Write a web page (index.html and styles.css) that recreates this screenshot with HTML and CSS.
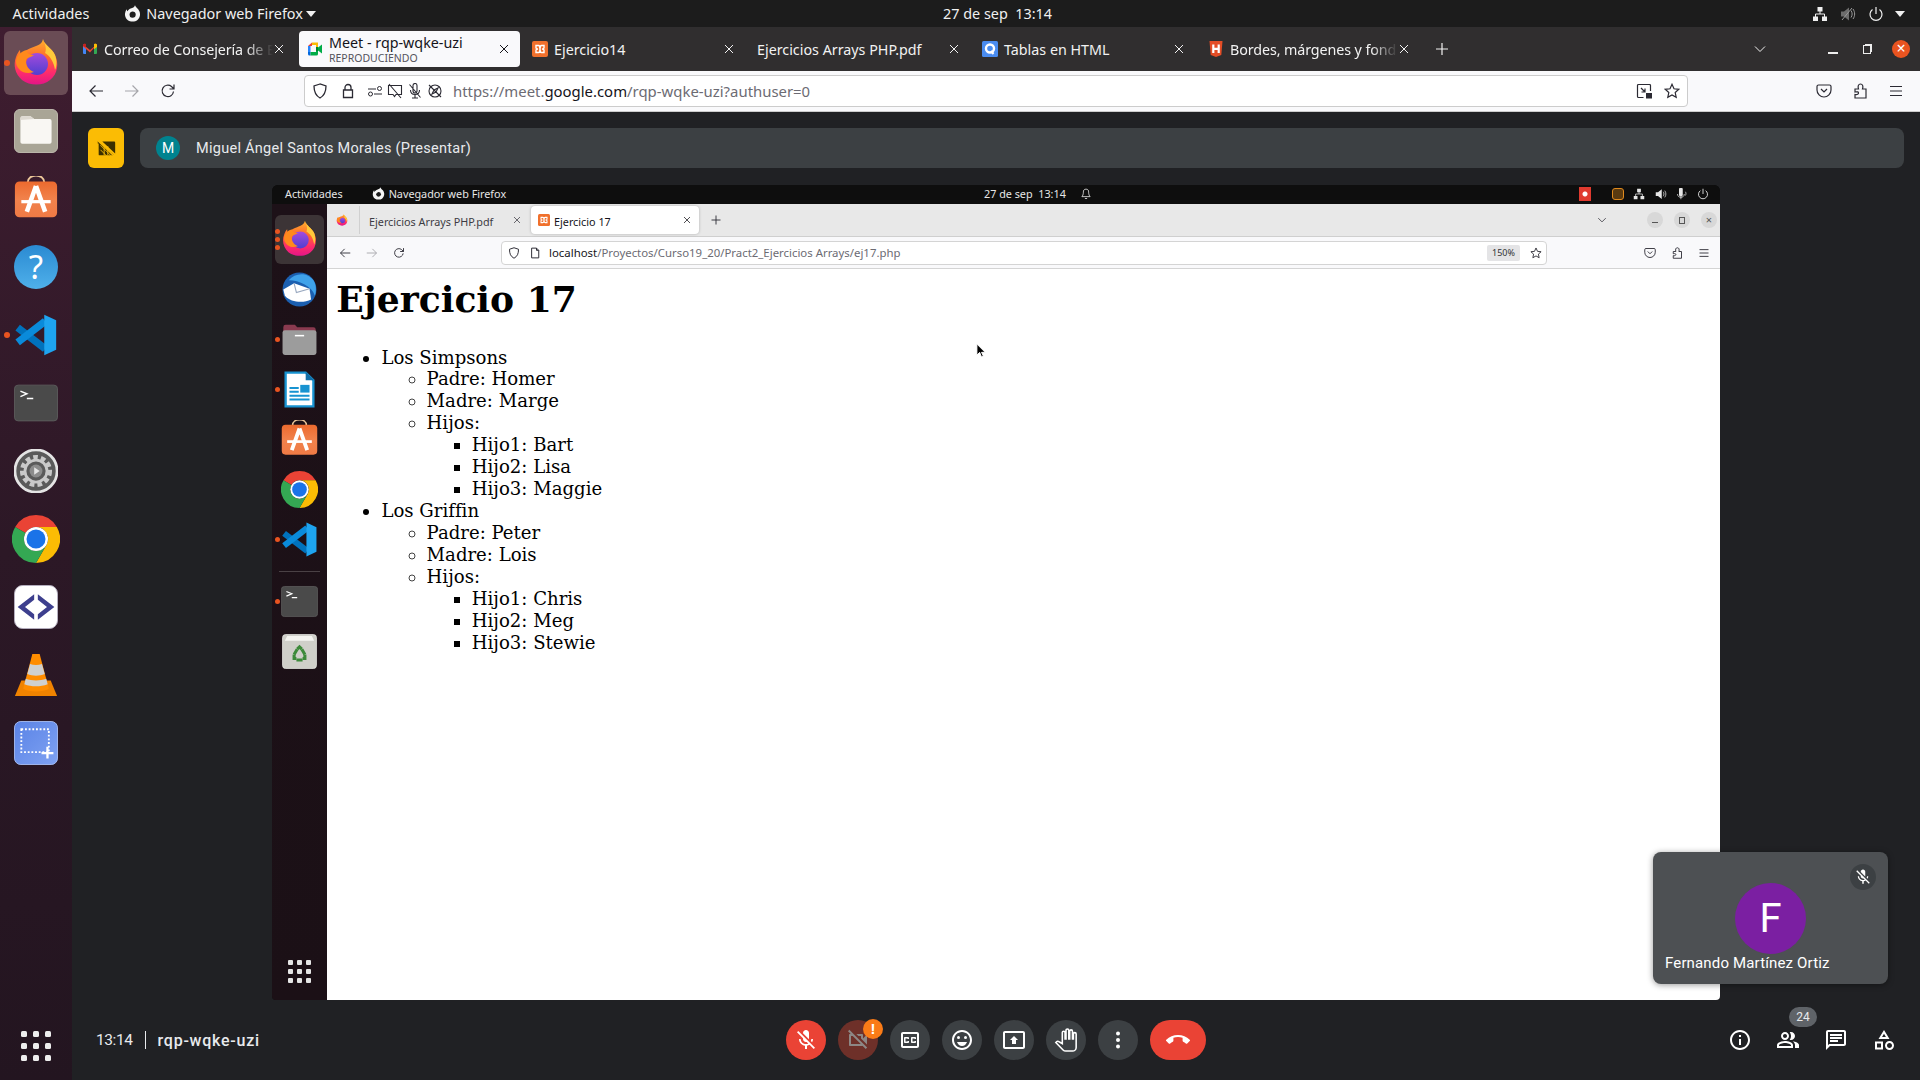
FILE: index.html
```html
<!DOCTYPE html>
<html lang="es">
<head>
    <meta charset="UTF-8">
    <title>Meet - rqp-wqke-uzi</title>
    <link rel="stylesheet" href="styles.css">
</head>
<body>
    <!-- Shared icons -->
    <svg class="sprites" xmlns="http://www.w3.org/2000/svg">
        <defs>
            <linearGradient id="ffBody" x1="0" y1="0" x2="0" y2="1">
                <stop offset="0" stop-color="#ffb02e"/><stop offset=".4" stop-color="#ff6a2b"/><stop offset=".72" stop-color="#ff2d6a"/><stop offset="1" stop-color="#e31587"/>
            </linearGradient>
            <linearGradient id="ffCore" x1="0" y1="0" x2="0" y2="1">
                <stop offset="0" stop-color="#a54bdc"/><stop offset="1" stop-color="#4f3fd0"/>
            </linearGradient>
            <linearGradient id="bagFill" x1="0" y1="0" x2="0" y2="1">
                <stop offset="0" stop-color="#ec6a2e"/><stop offset=".5" stop-color="#f1824c"/><stop offset="1" stop-color="#ef7a45"/>
            </linearGradient>
            <linearGradient id="shotFill" x1="0" y1="0" x2="1" y2="1">
                <stop offset="0" stop-color="#5a83e6"/><stop offset="1" stop-color="#7fa2f2"/>
            </linearGradient>
        </defs>
        <symbol id="i-firefox" viewBox="0 0 48 48">
            <path fill="url(#ffBody)" d="M31 1c2 7 9 9 12 16 4 8 3 19-5 25-7 6-20 6-28 0C3 36 1 27 4 19c1-3 3-6 4-7 0 3 1 5 2 6 2-5 6-7 9-8 5-2 11-3 12-9z"/>
            <path fill="#ffc93a" d="M31 1c2 7 9 9 12 16 2 5 2 11 0 15-1-8-5-14-10-17 2-4 0-9-2-14z"/>
            <circle cx="25" cy="26" r="11" fill="url(#ffCore)"/>
            <path fill="#ff8a1c" d="M4 24c0-6 5-11 11-12-1 3 3 5 7 5-4 3-8 2-8 6 0 5 3 9 8 11-6 2-12 1-15-3-2-2-3-5-3-7z"/>
        </symbol>
        <symbol id="i-fflogo" viewBox="0 0 48 48">
            <path fill="#f4f4f4" d="M31 1c2 7 9 9 12 16 4 8 3 19-5 25-7 6-20 6-28 0C3 36 1 27 4 19c1-3 3-6 4-7 0 3 1 5 2 6 2-5 6-7 9-8 5-2 11-3 12-9z"/>
            <circle cx="24" cy="27" r="9" fill="#1c1c1c"/>
            <path fill="#f4f4f4" d="M8 20c5-5 11-4 14-1-4 1-7 3-7 8 0 3 1 6 3 8-7-2-11-9-10-15z"/>
        </symbol>
        <symbol id="i-files" viewBox="0 0 48 48">
            <rect x=".5" y=".5" width="47" height="47" rx="6" fill="#a9a596" stroke="#c4c1b4"/>
            <path fill="#f9f7f3" d="M7 10a2 2 0 0 1 2-2h9l4 3h17a2 2 0 0 1 2 2v23a2 2 0 0 1-2 2H9a2 2 0 0 1-2-2z"/>
            <path fill="#dedad2" d="M7 12v-2a2 2 0 0 1 2-2h9l4 3z"/>
        </symbol>
        <symbol id="i-store" viewBox="0 2 48 48">
            <path d="M15 9c0-10 18-10 18 0" fill="none" stroke="#eec99b" stroke-width="2"/>
            <rect x="1" y="8" width="46" height="39" rx="5" fill="url(#bagFill)"/>
            <path d="M24 13 14 41M24 13l10 28" stroke="#fff" stroke-width="5" fill="none"/>
            <path d="M8 30h32" stroke="#fff" stroke-width="3.5"/>
        </symbol>
        <symbol id="i-code" viewBox="0 0 48 48">
            <path d="M4 16l30 23" stroke="#0072bd" stroke-width="8" fill="none"/>
            <path d="M4 32 34 9" stroke="#0a8bdb" stroke-width="8" fill="none"/>
            <path fill="#1ea4f0" d="M33 2l13 6v32l-13 6z"/>
        </symbol>
        <symbol id="i-term" viewBox="0 0 48 40">
            <rect x=".5" y=".5" width="47" height="39" rx="4" fill="#4a4a4a" stroke="#5c5c5c"/>
            <path d="M7 7l7 3-7 3M14 15h7" stroke="#fff" stroke-width="1.6" fill="none"/>
        </symbol>
        <symbol id="i-settings" viewBox="0 0 48 48">
            <circle cx="24" cy="24" r="23" fill="#5a5a5a" stroke="#e4e4e4" stroke-width="3"/>
            <circle cx="24" cy="24" r="15" fill="none" stroke="#c9c9c9" stroke-width="5" stroke-dasharray="5 3.4"/>
            <circle cx="24" cy="24" r="12" fill="none" stroke="#c9c9c9" stroke-width="3"/>
            <circle cx="24" cy="24" r="7" fill="#8c8c8c"/>
            <path fill="#e4e4e4" d="M22 20l6 4-6 4z"/>
        </symbol>
        <symbol id="i-chrome" viewBox="0 0 48 48">
            <path fill="#ea4335" d="M24 0a24 24 0 0 1 20.8 12H24a12 12 0 0 0-10.4 6L3.2 12A24 24 0 0 1 24 0z"/>
            <path fill="#fbbc04" d="M44.8 12A24 24 0 0 1 24 48l10.4-18A12 12 0 0 0 24 12z"/>
            <path fill="#34a853" d="M3.2 12A24 24 0 0 0 24 48l10.4-18a12 12 0 0 1-20.8-12z"/>
            <circle cx="24" cy="24" r="12" fill="#fff"/>
            <circle cx="24" cy="24" r="9.5" fill="#1a73e8"/>
        </symbol>
        <symbol id="i-connect" viewBox="0 0 48 48">
            <rect x=".5" y=".5" width="47" height="47" rx="9" fill="#fff" stroke="#b9b3c4"/>
            <path fill="#3d3f8e" d="M22 10v6l-10 8 10 8v6L4 24zM26 10v6l10 8-10 8v6l18-14z"/>
        </symbol>
        <symbol id="i-vlc" viewBox="0 0 48 48">
            <path fill="#f08300" d="M8 30h32l7 17H1z"/>
            <path fill="#ff8d00" d="M20 1h8l10 38c-6 4-22 4-28 0z"/>
            <path fill="#cfd0cf" d="M17.5 12c4 1.500 9 1.500 13 0l3 11c-6 2.500-13 2.500-19 0zM12.800 28c7 2.500 15.400 2.500 22.400 0l1.500 6c-8 3-17.400 3-25.400 0z"/>
        </symbol>
        <symbol id="i-shot" viewBox="0 0 48 48">
            <rect x=".5" y=".5" width="47" height="47" rx="7" fill="url(#shotFill)" stroke="#a9c0f5"/>
            <rect x="8" y="9" width="30" height="25" fill="none" stroke="#fff" stroke-width="2" stroke-dasharray="2 2"/>
            <path d="M30 35h13M36.500 28v13" stroke="#fff" stroke-width="2.500"/>
        </symbol>
        <symbol id="i-bird" viewBox="0 0 48 48">
            <circle cx="24" cy="24" r="22" fill="#1b5fb0"/>
            <path fill="#3fa2ea" d="M10 12c8-10 24-11 32 0 4 6 4 14 2 20-4-12-20-20-34-20z"/>
            <path fill="#fff" d="M3 24l14-8 20 7 2 14c-10 5-26 4-34-5z"/>
            <path fill="none" stroke="#9aa9c0" stroke-width="1.500" d="M17 16l3 12 17-5"/>
        </symbol>
        <symbol id="i-folder-red" viewBox="0 0 48 44">
            <path fill="#8a3a4f" d="M3 6a3 3 0 0 1 3-3h12l3 3h21a3 3 0 0 1 3 3v8H3z"/>
            <rect x="2" y="10" width="44" height="32" rx="3" fill="#9c9c9c"/>
            <path d="M18 17h12" stroke="#fff" stroke-width="2"/>
        </symbol>
        <symbol id="i-writer" viewBox="0 0 48 48">
            <path fill="#fff" stroke="#1793d1" stroke-width="3" d="M6 2h26l10 10v34H6z"/>
            <path fill="#126fa8" d="M32 1l11 11H32z"/>
            <path stroke="#1793d1" stroke-width="2.500" d="M11 22h12M11 27h12M11 32h26M11 37h26"/>
            <rect x="25" y="18" width="12" height="10" fill="#1793d1"/>
        </symbol>
        <symbol id="i-trash" viewBox="0 0 48 48">
            <rect x="2" y="2" width="44" height="44" rx="4" fill="#cfcfc9" stroke="#e6e6e2"/>
            <path fill="#f4f4f0" d="M8 4h32l3 6H5z"/>
            <g fill="none" stroke="#3c8a3a" stroke-width="4">
                <path d="M17 28l4-7M27 21l4 7M28 35h-8"/>
                <path d="M21 21l3-3 3 3M31 28v5h-3M17 28v5h3"/>
            </g>
        </symbol>
        <symbol id="t-gmail" viewBox="0 0 16 16">
            <path fill="#4285f4" d="M1 3.500h3V13H2a1 1 0 0 1-1-1z"/>
            <path fill="#34a853" d="M12 3.500h3V12a1 1 0 0 1-1 1h-2z"/>
            <path fill="#ea4335" d="M1 3.500 8 9l4-3.200V3l3 .5L8 11.500 1 5.500z"/>
            <path fill="#fbbc04" d="M12 3l1.500-.5 1.500 1V6l-3 2.200z"/>
            <path fill="#c5221f" d="M1 3.500 2.500 2.500 4 3v3.400L1 5z"/>
        </symbol>
        <symbol id="t-meet" viewBox="0 0 16 16">
            <path fill="#00832d" d="M9 5h2v6H9z"/>
            <path fill="#00ac47" d="M11 6.500l4-3v9l-4-3z"/>
            <path fill="#fbbc04" d="M5 1.500h6v4.500H9V4H5z"/>
            <path fill="#ea4335" d="M5 1.500V5H1z"/>
            <path fill="#2684fc" d="M1 5h2.500v6H1z"/>
            <path fill="#0066da" d="M1 11h2.500v3.500H2.500a1.500 1.500 0 0 1-1.500-1.500z"/>
            <path fill="#00ac47" d="M3.500 11H9v-1h2v3a1.500 1.500 0 0 1-1.500 1.500h-6z"/>
        </symbol>
        <symbol id="t-xampp" viewBox="0 0 16 16">
            <rect width="16" height="16" rx="2" fill="#f0702c"/>
            <path d="M4 4.500h2.500c2 0 1 3.500 1.500 3.500s-.5-3.500 1.500-3.500H12V7c0 1-2 1-2 1s2 0 2 1v2.500H9.500C7.500 11.500 8.500 8 8 8s.5 3.500-1.500 3.500H4V9c0-1 2-1 2-1S4 8 4 7z" fill="none" stroke="#fff" stroke-width="1.400"/>
        </symbol>
        <symbol id="t-quest" viewBox="0 0 16 16">
            <rect width="16" height="16" rx="1.500" fill="#4a8cf0"/>
            <circle cx="8" cy="7.500" r="4" fill="none" stroke="#fff" stroke-width="2.400"/>
            <path d="M9 10l2.500 3" stroke="#fff" stroke-width="2"/>
        </symbol>
        <symbol id="t-html" viewBox="0 0 16 16">
            <path fill="#e44d26" d="M1.500 0h13L13.300 14 8 16l-5.300-2z"/>
            <path d="M5.300 3.500v8.500M10.700 3.500v8.500M5.300 7.800h5.400" stroke="#fff" stroke-width="2.200"/>
        </symbol>
        <symbol id="u-close" viewBox="0 0 16 16"><path d="M4 4l8 8M12 4l-8 8" stroke="currentColor" fill="none"/></symbol>
        <symbol id="u-plus" viewBox="0 0 16 16"><path d="M8 2v12M2 8h12" stroke="currentColor" stroke-width="1.200" fill="none"/></symbol>
        <symbol id="u-chevron" viewBox="0 0 16 16"><path d="M3 5.500l5 5 5-5" stroke="currentColor" fill="none"/></symbol>
        <symbol id="u-back" viewBox="0 0 16 16"><path d="M15 8H2M7.500 2.500 2 8l5.500 5.500" stroke="currentColor" stroke-width="1.200" fill="none"/></symbol>
        <symbol id="u-fwd" viewBox="0 0 16 16"><path d="M1 8h13M8.500 2.500 14 8l-5.500 5.500" stroke="currentColor" stroke-width="1.200" fill="none"/></symbol>
        <symbol id="u-reload" viewBox="0 0 16 16"><path d="M13.500 8.500A5.700 5.700 0 1 1 11.500 3.500L14 6M14 1.500V6H9.500" stroke="currentColor" stroke-width="1.200" fill="none"/></symbol>
        <symbol id="u-shield" viewBox="0 0 16 16"><path d="M8 1 2 3c0 6 1.500 9.500 6 12 4.500-2.500 6-6 6-12z" stroke="currentColor" stroke-width="1.300" fill="none"/></symbol>
        <symbol id="u-lock" viewBox="0 0 16 16"><path d="M5 7V4.500a3 3 0 0 1 6 0V7M3.500 7h9v7.500h-9z" stroke="currentColor" stroke-width="1.300" fill="none"/></symbol>
        <symbol id="u-perms" viewBox="0 0 16 16"><path d="M1 6h8M7 11h8" stroke="currentColor" stroke-width="1.100"/><circle cx="12.500" cy="5.500" r="2" fill="none" stroke="currentColor"/><circle cx="3.500" cy="11" r="2" fill="none" stroke="currentColor"/></symbol>
        <symbol id="u-nocam" viewBox="0 0 16 16"><path d="M1.500 2.500h13v9H9l-1.500 2-1.500-2H1.500zM2 1l12 14" stroke="currentColor" stroke-width="1.100" fill="none"/></symbol>
        <symbol id="u-nomic" viewBox="0 0 16 16"><path d="M6 2.500a2 2 0 0 1 4 0V8a2 2 0 0 1-4 0zM3.500 7c0 6 9 6 9 0M8 12v3M5 15h6M2.500 1.500l11 13" stroke="currentColor" stroke-width="1.100" fill="none"/></symbol>
        <symbol id="u-nogeo" viewBox="0 0 16 16"><circle cx="8" cy="8" r="6" stroke="currentColor" stroke-width="1.100" fill="none"/><path d="M11 5 9 9 5 11l2-4zM2 2l12 12" stroke="currentColor" stroke-width="1.100" fill="none"/></symbol>
        <symbol id="u-pip" viewBox="0 0 16 16"><path d="M14.500 8V2.500a1 1 0 0 0-1-1h-11a1 1 0 0 0-1 1v11a1 1 0 0 0 1 1h5M5 5l4 4M9 5.500V9H5.500" stroke="currentColor" stroke-width="1.200" fill="none"/><rect x="10" y="10" width="6" height="5.500" fill="currentColor"/></symbol>
        <symbol id="u-star" viewBox="0 0 16 16"><path d="M8 1.300l2 4.500 4.800.5-3.600 3.200 1 4.800L8 11.900l-4.200 2.400 1-4.800L1.200 6.300 6 5.800z" stroke="currentColor" stroke-width="1.200" fill="none"/></symbol>
        <symbol id="u-pocket" viewBox="0 0 16 16"><path d="M2.500 2h11A1.500 1.500 0 0 1 15 3.500V7a7 7 0 0 1-14 0V3.500A1.500 1.500 0 0 1 2.500 2zM5 6l3 3 3-3" stroke="currentColor" stroke-width="1.200" fill="none"/></symbol>
        <symbol id="u-puzzle" viewBox="0 0 16 16"><path d="M3 6h3.500C5.500 3 6.500 1 8.500 1s3 2 2 5H14v9H3v-3.500c2.500.5 3.500-.5 3.500-1.500S5.500 8.500 3 9z" stroke="currentColor" stroke-width="1.200" fill="none"/></symbol>
        <symbol id="u-menu" viewBox="0 0 16 16"><path d="M2 3.500h12M2 8h12M2 12.500h12" stroke="currentColor" stroke-width="1.200"/></symbol>
        <symbol id="u-page" viewBox="0 0 16 16"><path d="M3.500 1.500H10l3 3v10H3.500zM10 1.500v3h3" stroke="currentColor" stroke-width="1.300" fill="none"/></symbol>
        <symbol id="u-network" viewBox="0 0 16 16"><path fill="currentColor" d="M5.500 1h5v4.500h-5zM1 10.500h5V15H1zM10 10.500h5V15h-5z"/><path d="M8 5v3M3.500 11V8h9v3" stroke="currentColor" fill="none"/></symbol>
        <symbol id="u-mute" viewBox="0 0 16 16"><path fill="#6d6d6d" d="M1 5.500h3L9 1.500v13l-5-4H1z"/><path d="M11 4.500c1.500 2 1.500 5 0 7M13 3c2.200 3 2.200 7 0 10" stroke="#9a9a9a" fill="none"/><path d="M2 14 12 2" stroke="#9a9a9a"/></symbol>
        <symbol id="u-speaker" viewBox="0 0 16 16"><path fill="currentColor" d="M1 5.500h3L9 1.500v13l-5-4H1z"/><path d="M11 5c1.200 1.800 1.200 4.200 0 6M13 3.500c2 2.800 2 6.200 0 9" stroke="currentColor" fill="none"/></symbol>
        <symbol id="u-mic" viewBox="0 0 16 16"><path fill="currentColor" d="M4 2a2.500 2.500 0 0 1 5 0v7a2.500 2.500 0 0 1-5 0z"/><path d="M2 8c0 6 9 6 9 0M6.500 12v3M12.500 5c1 1.500 1 3.500 0 5" stroke="currentColor" fill="none"/></symbol>
        <symbol id="u-power" viewBox="0 0 16 16"><path d="M8 1v7M4.500 3.500a6 6 0 1 0 7 0" stroke="currentColor" stroke-width="1.200" fill="none"/></symbol>
        <symbol id="u-bell" viewBox="0 0 16 16"><path d="M8 1.500c-3 0-3.500 2-3.500 4 0 3-1 5-2 6h11c-1-1-2-3-2-6 0-2-.5-4-3.500-4zM6.500 14h3" stroke="currentColor" stroke-width="1.100" fill="none"/></symbol>
        <symbol id="m-micoff" viewBox="0 0 24 24"><path fill="currentColor" d="M19 11h-1.700c0 .74-.16 1.430-.43 2.050l1.230 1.230c.56-.98.9-2.090.9-3.280zm-4.020.17c0-.06.02-.11.02-.17V5c0-1.660-1.340-3-3-3S9 3.340 9 5v.18l5.980 5.990zM4.270 3L3 4.270l6.010 6.010V11c0 1.660 1.330 3 2.990 3 .22 0 .44-.03.65-.08l1.660 1.660c-.71.33-1.500.52-2.310.52-2.760 0-5.300-2.100-5.300-5.100H5c0 3.410 2.720 6.230 6 6.720V21h2v-3.280c.91-.13 1.770-.45 2.540-.9L19.730 21 21 19.730 4.270 3z"/></symbol>
    </svg>

    <!-- GNOME top bar -->
    <header class="gnome-bar">
        <div class="gnome-left">
            <span>Actividades</span>
            <svg class="gnome-ff"><use href="#i-fflogo"/></svg>
            <span>Navegador web Firefox</span>
            <span class="caret"></span>
        </div>
        <span class="gnome-date">27 de sep&nbsp;&nbsp;13:14</span>
        <div class="gnome-right">
            <svg class="ico"><use href="#u-network"/></svg>
            <svg class="ico"><use href="#u-mute"/></svg>
            <svg class="ico"><use href="#u-power"/></svg>
            <span class="caret"></span>
        </div>
    </header>

    <div class="desktop">
        <!-- Ubuntu dock -->
        <nav class="dock">
            <div class="dock-item active"><span class="run-dot"></span><svg class="dock-ico big lift"><use href="#i-firefox"/></svg></div>
            <div class="dock-item"><svg class="dock-ico"><use href="#i-files"/></svg></div>
            <div class="dock-item"><svg class="dock-ico lift"><use href="#i-store"/></svg></div>
            <div class="dock-item"><span class="help-ico">?</span></div>
            <div class="dock-item"><span class="run-dot"></span><svg class="dock-ico"><use href="#i-code"/></svg></div>
            <div class="dock-item"><svg class="dock-ico"><use href="#i-term"/></svg></div>
            <div class="dock-item"><svg class="dock-ico"><use href="#i-settings"/></svg></div>
            <div class="dock-item"><svg class="dock-ico big"><use href="#i-chrome"/></svg></div>
            <div class="dock-item"><svg class="dock-ico"><use href="#i-connect"/></svg></div>
            <div class="dock-item"><svg class="dock-ico"><use href="#i-vlc"/></svg></div>
            <div class="dock-item"><svg class="dock-ico"><use href="#i-shot"/></svg></div>
            <div class="app-grid">
                <i></i><i></i><i></i><i></i><i></i><i></i><i></i><i></i><i></i>
            </div>
        </nav>

        <div class="firefox">
            <!-- Tabs -->
            <div class="tabbar">
                <div class="tab">
                    <svg class="tab-ico"><use href="#t-gmail"/></svg>
                    <span class="tab-title fade">Correo de Consejería de E</span>
                    <svg class="tab-x"><use href="#u-close"/></svg>
                </div>
                <div class="tab current">
                    <svg class="tab-ico"><use href="#t-meet"/></svg>
                    <span class="tab-title">Meet - rqp-wqke-uzi<small>REPRODUCIENDO</small></span>
                    <svg class="tab-x"><use href="#u-close"/></svg>
                </div>
                <div class="tab">
                    <svg class="tab-ico"><use href="#t-xampp"/></svg>
                    <span class="tab-title">Ejercicio14</span>
                    <svg class="tab-x"><use href="#u-close"/></svg>
                </div>
                <div class="tab">
                    <span class="tab-title">Ejercicios Arrays PHP.pdf</span>
                    <svg class="tab-x"><use href="#u-close"/></svg>
                </div>
                <div class="tab">
                    <svg class="tab-ico"><use href="#t-quest"/></svg>
                    <span class="tab-title">Tablas en HTML</span>
                    <svg class="tab-x"><use href="#u-close"/></svg>
                </div>
                <div class="tab">
                    <svg class="tab-ico small"><use href="#t-html"/></svg>
                    <span class="tab-title fade">Bordes, márgenes y fond</span>
                    <svg class="tab-x"><use href="#u-close"/></svg>
                </div>
                <svg class="tab-plus"><use href="#u-plus"/></svg>
                <div class="win-controls">
                    <svg class="ico"><use href="#u-chevron"/></svg>
                    <span class="win-min"></span>
                    <span class="win-max"></span>
                    <span class="win-close">×</span>
                </div>
            </div>

            <!-- Toolbar -->
            <div class="toolbar">
                <svg class="ico"><use href="#u-back"/></svg>
                <svg class="ico dim"><use href="#u-fwd"/></svg>
                <svg class="ico"><use href="#u-reload"/></svg>
                <div class="urlbar">
                    <svg class="ico"><use href="#u-shield"/></svg>
                    <svg class="ico"><use href="#u-lock"/></svg>
                    <span class="perms">
                        <svg class="ico"><use href="#u-perms"/></svg>
                        <svg class="ico"><use href="#u-nocam"/></svg>
                        <svg class="ico"><use href="#u-nomic"/></svg>
                        <svg class="ico"><use href="#u-nogeo"/></svg>
                    </span>
                    <span class="url">https://meet.<b>google.com</b>/rqp-wqke-uzi?authuser=0</span>
                    <svg class="ico push"><use href="#u-pip"/></svg>
                    <svg class="ico"><use href="#u-star"/></svg>
                </div>
                <div class="tool-right">
                    <svg class="ico"><use href="#u-pocket"/></svg>
                    <svg class="ico"><use href="#u-puzzle"/></svg>
                    <svg class="ico"><use href="#u-menu"/></svg>
                </div>
            </div>

            <!-- Google Meet -->
            <main class="meet">
                <div class="presenter-row">
                    <button class="stop-share">
                        <svg viewBox="0 0 24 24" class="stop-ico">
                            <path fill="#3c3000" d="M3 4l17 15v1H5a1 1 0 0 1-1-1V7H3zM8 5h13a1 1 0 0 1 1 1v12z"/>
                            <path d="M2 3l19 18" stroke="#fbbc04" stroke-width="1.500"/>
                            <path d="M6 9l12 12M6 14l7 7M10 8v12M14 10v10" stroke="#fbbc04"/>
                        </svg>
                    </button>
                    <div class="presenter-bar">
                        <span class="avatar-m">M</span>
                        <span>Miguel Ángel Santos Morales (Presentar)</span>
                    </div>
                </div>

                <!-- Shared screen -->
                <section class="screen">
                    <div class="in-bar">
                        <div class="in-left">
                            <span>Actividades</span>
                            <svg class="in-ff"><use href="#i-fflogo"/></svg>
                            <span>Navegador web Firefox</span>
                        </div>
                        <span class="in-date">27 de sep&nbsp;&nbsp;13:14</span>
                        <svg class="ico-s in-bell"><use href="#u-bell"/></svg>
                        <div class="in-right">
                            <span class="rec"></span>
                            <span class="tray-orange"></span>
                            <svg class="ico-s"><use href="#u-network"/></svg>
                            <svg class="ico-s"><use href="#u-speaker"/></svg>
                            <svg class="ico-s"><use href="#u-mic"/></svg>
                            <svg class="ico-s"><use href="#u-power"/></svg>
                        </div>
                    </div>
                    <div class="in-body">
                        <nav class="in-dock">
                            <div class="in-item active"><span class="in-dots"><i></i><i></i><i></i></span><svg class="in-ico lift"><use href="#i-firefox"/></svg></div>
                            <div class="in-item"><svg class="in-ico"><use href="#i-bird"/></svg></div>
                            <div class="in-item"><span class="in-dots"><i></i></span><svg class="in-ico"><use href="#i-folder-red"/></svg></div>
                            <div class="in-item"><span class="in-dots"><i></i></span><svg class="in-ico"><use href="#i-writer"/></svg></div>
                            <div class="in-item"><svg class="in-ico lift"><use href="#i-store"/></svg></div>
                            <div class="in-item"><svg class="in-ico"><use href="#i-chrome"/></svg></div>
                            <div class="in-item"><span class="in-dots"><i></i></span><svg class="in-ico"><use href="#i-code"/></svg></div>
                            <hr class="in-sep">
                            <div class="in-item"><span class="in-dots"><i></i></span><svg class="in-ico"><use href="#i-term"/></svg></div>
                            <div class="in-item"><svg class="in-ico"><use href="#i-trash"/></svg></div>
                            <div class="in-grid">
                                <i></i><i></i><i></i><i></i><i></i><i></i><i></i><i></i><i></i>
                            </div>
                        </nav>
                        <div class="in-window">
                            <div class="in-tabbar">
                                <svg class="in-view"><use href="#i-firefox"/></svg>
                                <div class="in-tab">
                                    <span>Ejercicios Arrays PHP.pdf</span>
                                    <svg class="ico-s"><use href="#u-close"/></svg>
                                </div>
                                <div class="in-tab current">
                                    <svg class="in-fav"><use href="#t-xampp"/></svg>
                                    <span>Ejercicio 17</span>
                                    <svg class="ico-s"><use href="#u-close"/></svg>
                                </div>
                                <svg class="ico-s in-plus"><use href="#u-plus"/></svg>
                                <div class="in-win">
                                    <svg class="ico-s"><use href="#u-chevron"/></svg>
                                    <span class="in-btn first"><i class="btn-min"></i></span>
                                    <span class="in-btn"><i class="btn-max"></i></span>
                                    <span class="in-btn">×</span>
                                </div>
                            </div>
                            <div class="in-toolbar">
                                <svg class="ico-s"><use href="#u-back"/></svg>
                                <svg class="ico-s dim"><use href="#u-fwd"/></svg>
                                <svg class="ico-s"><use href="#u-reload"/></svg>
                                <div class="in-url">
                                    <svg class="ico-s"><use href="#u-shield"/></svg>
                                    <svg class="ico-s"><use href="#u-page"/></svg>
                                    <span class="in-addr"><b>localhost</b>/Proyectos/Curso19_20/Pract2_Ejercicios Arrays/ej17.php</span>
                                    <span class="zoom-pill">150%</span>
                                    <svg class="ico-s"><use href="#u-star"/></svg>
                                </div>
                                <div class="in-tools">
                                    <svg class="ico-s"><use href="#u-pocket"/></svg>
                                    <svg class="ico-s"><use href="#u-puzzle"/></svg>
                                    <svg class="ico-s"><use href="#u-menu"/></svg>
                                </div>
                            </div>
                            <article class="page">
                                <h1>Ejercicio 17</h1>
                                <ul>
                                    <li>Los Simpsons
                                        <ul>
                                            <li>Padre: Homer</li>
                                            <li>Madre: Marge</li>
                                            <li>Hijos:
                                                <ul>
                                                    <li>Hijo1: Bart</li>
                                                    <li>Hijo2: Lisa</li>
                                                    <li>Hijo3: Maggie</li>
                                                </ul>
                                            </li>
                                        </ul>
                                    </li>
                                    <li>Los Griffin
                                        <ul>
                                            <li>Padre: Peter</li>
                                            <li>Madre: Lois</li>
                                            <li>Hijos:
                                                <ul>
                                                    <li>Hijo1: Chris</li>
                                                    <li>Hijo2: Meg</li>
                                                    <li>Hijo3: Stewie</li>
                                                </ul>
                                            </li>
                                        </ul>
                                    </li>
                                </ul>
                                <svg class="pointer" viewBox="0 0 12 16"><path d="M1 1v12l3-3 2 5 2-1-2-4h4z" fill="#000" stroke="#fff"/></svg>
                            </article>
                        </div>
                    </div>
                </section>

                <!-- Self view tile -->
                <aside class="tile">
                    <span class="tile-mic"><svg class="m-ico"><use href="#m-micoff"/></svg></span>
                    <span class="tile-avatar">F</span>
                    <span class="tile-name">Fernando Martínez Ortiz</span>
                </aside>

                <!-- Call controls -->
                <footer class="controls">
                    <div class="meeting-info">
                        <span class="clock">13:14</span>
                        <span class="bar"></span>
                        <span class="code">rqp-wqke-uzi</span>
                    </div>
                    <div class="call-buttons">
                        <button class="round red"><svg class="m-ico"><use href="#m-micoff"/></svg></button>
                        <button class="round muted-red">
                            <svg class="m-ico" viewBox="0 0 24 24"><path fill="currentColor" d="M9.560 8l-2-2-4.150-4.140L2 3.270 4.730 6H4c-.55 0-1 .45-1 1v10c0 .55.45 1 1 1h12c.21 0 .39-.08.55-.18L19.730 21l1.410-1.410-8.860-8.860L9.560 8zM5 16V8h1.730l8 8H5zm10-8v2.610l6 6V6.500l-4 4V7c0-.55-.45-1-1-1h-5.610l2 2H15z"/></svg>
                            <span class="warn">!</span>
                        </button>
                        <button class="round"><svg class="m-ico" viewBox="0 0 24 24"><path fill="currentColor" d="M19 4H5c-1.110 0-2 .9-2 2v12c0 1.100.89 2 2 2h14c1.100 0 2-.9 2-2V6c0-1.100-.9-2-2-2zm0 14H5V6h14v12zM7 15h3c.55 0 1-.45 1-1v-1H9.500v.5h-2v-3h2v.5H11v-1c0-.55-.45-1-1-1H7c-.55 0-1 .45-1 1v4c0 .55.45 1 1 1zm7 0h3c.55 0 1-.45 1-1v-1h-1.500v.5h-2v-3h2v.5H18v-1c0-.55-.45-1-1-1h-3c-.55 0-1 .45-1 1v4c0 .55.45 1 1 1z"/></svg></button>
                        <button class="round"><svg class="m-ico" viewBox="0 0 24 24"><path fill="currentColor" d="M11.990 2C6.470 2 2 6.480 2 12s4.470 10 9.990 10C17.520 22 22 17.520 22 12S17.520 2 11.990 2zM12 20c-4.420 0-8-3.580-8-8s3.580-8 8-8 8 3.580 8 8-3.580 8-8 8z"/><circle cx="15.500" cy="9.500" r="1.500" fill="currentColor"/><circle cx="8.500" cy="9.500" r="1.500" fill="currentColor"/><path fill="currentColor" d="M12 18c2.280 0 4.220-1.660 5-4H7c.78 2.340 2.720 4 5 4z"/></svg></button>
                        <button class="round"><svg class="m-ico" viewBox="0 0 24 24"><path fill="currentColor" d="M21 3H3c-1.110 0-2 .89-2 2v14c0 1.110.89 2 2 2h18c1.110 0 2-.89 2-2V5c0-1.110-.89-2-2-2zm0 16.020H3V4.980h18v14.040zM10 12H8l4-4 4 4h-2v4h-4v-4z"/></svg></button>
                        <button class="round"><svg class="m-ico" viewBox="-1 -1 26 26"><path fill="none" stroke="currentColor" stroke-width="1.700" d="M23 5.500V20c0 2.200-1.800 4-4 4h-7.300c-1.080 0-2.100-.43-2.850-1.190L1 14.830s1.260-1.230 1.300-1.250c.22-.19.49-.29.79-.29.22 0 .42.06.6.16.04.01 4.310 2.460 4.310 2.460V4c0-.83.67-1.500 1.500-1.500S11 3.170 11 4v7h1V1.500c0-.83.67-1.500 1.500-1.500S15 .67 15 1.500V11h1V2.500c0-.83.67-1.500 1.500-1.500s1.500.67 1.500 1.500V11h1V5.500c0-.83.67-1.500 1.500-1.500s1.500.67 1.500 1.500z"/></svg></button>
                        <button class="round"><svg class="m-ico" viewBox="0 0 24 24"><circle cx="12" cy="5.500" r="2" fill="currentColor"/><circle cx="12" cy="12" r="2" fill="currentColor"/><circle cx="12" cy="18.500" r="2" fill="currentColor"/></svg></button>
                        <button class="hangup"><svg class="m-ico" viewBox="0 0 24 24"><path fill="currentColor" d="M12 9c-1.600 0-3.150.25-4.600.72v3.100c0 .39-.23.74-.56.9-.98.49-1.870 1.120-2.660 1.850-.18.18-.43.28-.7.28-.28 0-.53-.11-.71-.29L.29 13.080c-.18-.17-.29-.42-.29-.7 0-.28.11-.53.29-.71C3.340 8.780 7.460 7 12 7s8.660 1.780 11.710 4.670c.18.18.29.43.29.71 0 .28-.11.53-.29.71l-2.480 2.480c-.18.18-.43.29-.71.29-.27 0-.52-.11-.7-.28-.79-.74-1.690-1.360-2.670-1.850-.33-.16-.56-.5-.56-.9v-3.100C15.150 9.250 13.600 9 12 9z"/></svg></button>
                    </div>
                    <div class="side-buttons">
                        <svg class="m-ico" viewBox="0 0 24 24"><path fill="currentColor" d="M11 7h2v2h-2zm0 4h2v6h-2zm1-9C6.480 2 2 6.480 2 12s4.480 10 10 10 10-4.480 10-10S17.520 2 12 2zm0 18c-4.410 0-8-3.590-8-8s3.590-8 8-8 8 3.590 8 8-3.590 8-8 8z"/></svg>
                        <span class="people">
                            <svg class="m-ico" viewBox="0 0 24 24"><path fill="currentColor" d="M16.670 13.130C18.040 14.060 19 15.320 19 17v3h4v-3c0-2.180-3.570-3.470-6.330-3.870zM15 12c2.210 0 4-1.790 4-4s-1.790-4-4-4c-.47 0-.91.1-1.330.24C14.500 5.270 15 6.580 15 8s-.5 2.730-1.330 3.760c.42.14.86.24 1.330.24zM9 12c2.210 0 4-1.790 4-4s-1.790-4-4-4-4 1.790-4 4 1.790 4 4 4zm0-6c1.100 0 2 .9 2 2s-.9 2-2 2-2-.9-2-2 .9-2 2-2zM9 13c-2.670 0-8 1.340-8 4v3h16v-3c0-2.660-5.330-4-8-4zm6 5H3v-.99C3.200 16.290 6.300 15 9 15s5.800 1.290 6 2v1z"/></svg>
                            <span class="people-count">24</span>
                        </span>
                        <svg class="m-ico" viewBox="0 0 24 24"><path fill="currentColor" d="M20 2H4c-1.100 0-2 .9-2 2v18l4-4h14c1.100 0 2-.9 2-2V4c0-1.100-.9-2-2-2zm0 14H5.170L4 17.170V4h16v12zM6 12h8v2H6zM6 9h12v2H6zM6 6h12v2H6z"/></svg>
                        <svg class="m-ico" viewBox="0 0 24 24"><path fill="currentColor" d="M12 2l-5.500 9h11L12 2zm0 3.840L13.930 9h-3.870L12 5.840zM17.500 13c-2.490 0-4.500 2.010-4.500 4.500s2.010 4.500 4.500 4.500 4.500-2.010 4.500-4.500-2.010-4.500-4.500-4.500zm0 7c-1.380 0-2.500-1.120-2.500-2.500s1.120-2.500 2.500-2.500 2.500 1.120 2.500 2.500-1.120 2.500-2.500 2.500zM3 21.500h8v-8H3v8zm2-6h4v4H5v-4z"/></svg>
                    </div>
                </footer>
            </main>
        </div>
    </div>
</body>
</html>
```

FILE: styles.css
```css
:root {
    --ui-font: "Noto Sans", sans-serif;
    --meet-font: Roboto, sans-serif;
    --meet-bg: #202124;
    --meet-grey: #3c4043;
    --meet-red: #ea4335;
    --ubuntu-orange: #e95420;
}

* {
    margin: 0;
    padding: 0;
    box-sizing: border-box;
}

html, body {
    width: 1920px;
    height: 1080px;
    overflow: hidden;
}

body {
    display: flex;
    flex-direction: column;
    font-family: var(--ui-font);
    background: #000;
}

.sprites {
    position: absolute;
    width: 0;
    height: 0;
}

.ico {
    width: 16px;
    height: 16px;
    flex: none;
}

.ico-s {
    width: 12px;
    height: 12px;
    flex: none;
}

.dim {
    opacity: .4;
}

/* GNOME top bar */
.gnome-bar {
    height: 27px;
    display: flex;
    align-items: center;
    flex: none;
    background: #1c1c1c;
    color: #f0f0f0;
    font-size: 14.4px;
}

.gnome-left {
    width: 943px;
    padding-left: 12.5px;
    display: flex;
    align-items: center;
}

.gnome-ff {
    width: 17px;
    height: 17px;
    margin: 0 5px 0 35px;
}

.caret {
    width: 0;
    height: 0;
    margin-left: 3px;
    border: 5px solid transparent;
    border-top: 6px solid #f0f0f0;
    border-bottom: 0;
}

.gnome-right {
    margin-left: auto;
    padding-right: 15px;
    display: flex;
    align-items: center;
    gap: 12px;
}

.gnome-right .caret {
    margin-left: -1px;
}

/* Dock */
.desktop {
    flex: 1;
    display: flex;
    min-height: 0;
}

.dock {
    width: 72px;
    flex: none;
    padding: 4px 4px 19px;
    display: flex;
    flex-direction: column;
    gap: 4px;
    background: linear-gradient(180deg, #3f1d30 0%, #2c1826 50%, #231520 100%);
}

.dock-item {
    position: relative;
    height: 64px;
    display: flex;
    align-items: center;
    justify-content: center;
    border-radius: 6px;
    flex: none;
}

.dock-item.active {
    background: #6a4c55;
}

.dock-ico {
    width: 44px;
    height: 44px;
}

.dock-ico.big {
    width: 48px;
    height: 48px;
}

.dock-ico.lift {
    margin-top: -3px;
}

.help-ico {
    width: 44px;
    height: 44px;
    border-radius: 50%;
    background: linear-gradient(180deg, #2a8ad2, #4fb0ea);
    color: #fff;
    font-size: 33px;
    line-height: 44px;
    text-align: center;
}

.run-dot {
    position: absolute;
    left: 0;
    top: 29px;
    width: 6px;
    height: 6px;
    border-radius: 50%;
    background: var(--ubuntu-orange);
}

.app-grid {
    margin-top: auto;
    align-self: center;
    display: grid;
    grid-template-columns: repeat(3, 6px);
    gap: 6px;
}

.app-grid i {
    height: 6px;
    border-radius: 1.5px;
    background: #eee;
}

/* Firefox chrome */
.firefox {
    flex: 1;
    display: flex;
    flex-direction: column;
    min-width: 0;
}

.tabbar {
    height: 44px;
    flex: none;
    padding-left: 2px;
    display: flex;
    align-items: center;
    gap: 4px;
    background: #302e2f;
    color: #f2f2f2;
    font-size: 14.3px;
}

.tab {
    width: 221px;
    height: 36px;
    padding: 0 8px;
    flex: none;
    display: flex;
    align-items: center;
    gap: 6px;
    border-radius: 4px;
}

.tab.current {
    background: #f9f9fb;
    color: #15141a;
}

.tab-ico {
    width: 16px;
    height: 16px;
    flex: none;
}

.tab-ico.small {
    margin-left: 1px;
}

.tab-title {
    flex: 1;
    min-width: 0;
    padding-top: 2px;
    white-space: nowrap;
    line-height: 18px;
}

.tab.current .tab-title {
    padding-top: 0;
    line-height: 17px;
}

.tab-title.fade {
    margin-right: -8px;
    letter-spacing: -.1px;
    -webkit-mask-image: linear-gradient(90deg, #000 84%, transparent 100%);
    mask-image: linear-gradient(90deg, #000 84%, transparent 100%);
}

.tab-title small {
    display: block;
    margin-top: 1px;
    font-size: 10.5px;
    line-height: 12px;
    color: #55545c;
}

.tab-x {
    width: 16px;
    height: 16px;
    flex: none;
}

.tab-plus {
    width: 16px;
    height: 16px;
    margin-left: 10px;
}

.win-controls {
    margin-left: auto;
    padding-right: 10px;
    display: flex;
    align-items: center;
}

.win-min {
    width: 10px;
    height: 1.5px;
    margin: 8px 0 0 60px;
    background: #eee;
}

.win-max {
    width: 8px;
    height: 9px;
    margin-left: 25px;
    border: 1px solid #eee;
    box-shadow: 1.5px -1.5px 0 -0.5px #eee;
}

.win-close {
    width: 18px;
    height: 18px;
    margin-left: 21px;
    border-radius: 50%;
    background: var(--ubuntu-orange);
    color: #fff;
    font-size: 16px;
    line-height: 17px;
    text-align: center;
}

.toolbar {
    height: 41px;
    flex: none;
    padding: 0 16px;
    display: flex;
    align-items: center;
    gap: 20px;
    background: #f9f9fb;
    color: #2b2a33;
    border-bottom: 1px solid #ccc;
}

.urlbar {
    width: 1384px;
    height: 32px;
    margin: 0 108px;
    padding: 0 7px;
    display: flex;
    align-items: center;
    gap: 12px;
    background: #fff;
    border: 1px solid #ccc;
    border-radius: 4px;
}

.perms {
    display: flex;
    gap: 4px;
    margin-left: -1px;
}

.url {
    margin-left: -2px;
    font-size: 14.9px;
    color: #6c6b73;
    white-space: nowrap;
}

.url b {
    font-weight: 400;
    color: #15141a;
}

.push {
    margin-left: auto;
}

.tool-right {
    display: flex;
    gap: 20px;
    margin-left: auto;
}

/* Meet */
.meet {
    position: relative;
    flex: 1;
    min-height: 0;
    display: flex;
    flex-direction: column;
    background: var(--meet-bg);
    font-family: var(--meet-font);
}

.presenter-row {
    height: 40px;
    margin: 16px 16px 0;
    flex: none;
    display: flex;
    gap: 16px;
}

.stop-share {
    width: 36px;
    border: 0;
    border-radius: 6px;
    background: #fbbc04;
    display: flex;
    align-items: center;
    justify-content: center;
}

.stop-ico {
    width: 22px;
    height: 22px;
}

.presenter-bar {
    flex: 1;
    padding-left: 16px;
    display: flex;
    align-items: center;
    gap: 16px;
    border-radius: 8px;
    background: var(--meet-grey);
    color: #e8eaed;
    font-size: 14.5px;
    letter-spacing: .28px;
}

.avatar-m {
    width: 24px;
    height: 24px;
    border-radius: 50%;
    background: #00838f;
    color: #fff;
    font-size: 14px;
    line-height: 24px;
    letter-spacing: 0;
    text-align: center;
}

/* Shared screen */
.screen {
    width: 1448px;
    height: 815px;
    margin: 17px 0 0 200px;
    flex: none;
    display: flex;
    flex-direction: column;
    border-radius: 6px 6px 4px 4px;
    overflow: hidden;
    background: #0d0d0d;
}

.in-bar {
    height: 19px;
    flex: none;
    padding-bottom: 2px;
    display: flex;
    align-items: center;
    background: #0e0e0e;
    color: #e6e6e6;
    font-family: var(--ui-font);
    font-size: 10.8px;
}

.in-left {
    width: 712px;
    padding-left: 13px;
    display: flex;
    align-items: center;
}

.in-ff {
    width: 13px;
    height: 13px;
    margin: 0 4px 0 29px;
}

.in-bell {
    margin-left: 14px;
}

.in-right {
    margin-left: auto;
    padding-right: 11px;
    display: flex;
    align-items: center;
    gap: 9.25px;
}

.rec {
    width: 12px;
    height: 14px;
    margin-right: 12px;
    background: radial-gradient(circle, #fff 0 2px, #e03a2f 3px);
}

.tray-orange {
    width: 12px;
    height: 12px;
    border: 1.5px solid #e08a1e;
    border-radius: 3px;
    background: #5a3a10;
}

.in-body {
    flex: 1;
    display: flex;
    min-height: 0;
}

.in-dock {
    width: 55px;
    flex: none;
    padding: 11px 3px 17px;
    display: flex;
    flex-direction: column;
    gap: 1px;
    background: linear-gradient(180deg, #1d1118 0%, #1b1016 100%);
}

.in-item {
    position: relative;
    height: 49px;
    flex: none;
    display: flex;
    align-items: center;
    justify-content: center;
    border-radius: 6px;
}

.in-item.active {
    background: #3c3436;
}

.in-ico {
    width: 37px;
    height: 37px;
}

.in-ico.lift {
    margin-top: -3px;
}

.in-dots {
    position: absolute;
    left: 0;
    top: 0;
    bottom: 0;
    display: flex;
    flex-direction: column;
    justify-content: center;
    gap: 3px;
}

.in-dots i {
    width: 5px;
    height: 5px;
    border-radius: 50%;
    background: var(--ubuntu-orange);
}

.in-sep {
    margin: 6px 4px 4px;
    border: 0;
    border-top: 1px solid #4a4145;
}

.in-grid {
    margin-top: auto;
    align-self: center;
    display: grid;
    grid-template-columns: repeat(3, 5px);
    gap: 4px;
}

.in-grid i {
    height: 5px;
    border-radius: 1px;
    background: #e6e6e6;
}

.in-window {
    flex: 1;
    min-width: 0;
    display: flex;
    flex-direction: column;
    font-family: var(--ui-font);
}

.in-tabbar {
    height: 33px;
    flex: none;
    padding-left: 9px;
    display: flex;
    align-items: center;
    background: #e8e8e8;
    border-bottom: 1px solid #cfcfcf;
    color: #2b2a33;
    font-size: 10.8px;
}

.in-view {
    width: 12px;
    height: 12px;
    margin-right: 11px;
}

.in-tab {
    width: 168px;
    height: 28px;
    padding: 2px 4px 0 9px;
    flex: none;
    display: flex;
    align-items: center;
    gap: 4px;
    border-left: 1px solid #d0d0d0;
    margin-right: 5px;
    color: #3d3c44;
}

.in-tab .ico-s {
    margin-top: -2px;
}

.in-tab span {
    flex: 1;
    white-space: nowrap;
}

.in-tab.current {
    background: #fff;
    border: 0;
    border-radius: 4px;
    padding: 2px 6px 0 7px;
    margin: 0 11px 0 -1px;
    color: #15141a;
    box-shadow: 0 0 3px rgba(0,0,0,.25);
}

.in-fav {
    width: 12px;
    height: 12px;
    margin-top: -2px;
}

.in-win {
    margin-left: auto;
    padding-right: 3px;
    display: flex;
    align-items: center;
}

.in-win .ico-s {
    margin-right: -2px;
}

.in-btn {
    width: 16px;
    height: 16px;
    margin-left: 11px;
    border-radius: 50%;
    background: #d8d8d8;
    color: #555;
    font-size: 11px;
    line-height: 16px;
    text-align: center;
    display: flex;
    align-items: center;
    justify-content: center;
}

.in-btn.first {
    margin-left: 41px;
}

.btn-min {
    width: 6px;
    height: 1px;
    margin-top: 4px;
    background: #555;
}

.btn-max {
    width: 6px;
    height: 7px;
    border: 1px solid #555;
}

.in-toolbar {
    height: 32px;
    flex: none;
    padding: 0 10px 0 12px;
    display: flex;
    align-items: center;
    gap: 15px;
    background: #f9f9fb;
    color: #2b2a33;
    border-bottom: 1px solid #d4d4d4;
}

.in-url {
    width: 1046px;
    height: 24px;
    margin-left: 81px;
    padding: 0 4px 0 6px;
    flex: none;
    display: flex;
    align-items: center;
    gap: 9px;
    background: #fff;
    border: 1px solid #d4d4d4;
    border-radius: 4px;
}

.in-addr {
    flex: 1;
    margin-left: -1px;
    font-size: 11.4px;
    color: #6c6b73;
    white-space: nowrap;
}

.in-addr b {
    font-weight: 400;
    color: #15141a;
}

.zoom-pill {
    padding: 0 5px;
    height: 16px;
    margin-right: 1px;
    border-radius: 2px;
    background: #e4e4e6;
    font-size: 9px;
    line-height: 16px;
    color: #333;
}

.in-tools {
    margin-left: auto;
    display: flex;
    gap: 15px;
}

/* Page shown on the shared screen */
.page {
    position: relative;
    flex: 1;
    padding: 9px 9.2px;
    background: #fff;
    color: #000;
    font-family: "DejaVu Serif", serif;
    font-size: 18.1px;
    line-height: 21.95px;
}

.page h1 {
    font-size: 36.1px;
    line-height: 44px;
}

.page > ul {
    margin-top: 24.5px;
}

.page ul {
    padding-left: 45.2px;
}

.page ul ul > li::marker {
    color: #444;
}

.page ul ul ul > li::marker {
    color: #000;
}

.pointer {
    position: absolute;
    left: 649px;
    top: 74px;
    width: 11px;
    height: 15px;
}

/* Self view */
.tile {
    position: absolute;
    left: 1581px;
    top: 740px;
    width: 235px;
    height: 132px;
    border-radius: 8px;
    background: #4d5053;
    box-shadow: 0 1px 6px rgba(0,0,0,.4);
    color: #fff;
}

.tile-mic {
    position: absolute;
    right: 12px;
    top: 12px;
    width: 26px;
    height: 26px;
    padding: 4px;
    border-radius: 50%;
    background: #3c4043;
    display: flex;
}

.tile-mic .m-ico {
    width: 18px;
    height: 18px;
}

.tile-avatar {
    position: absolute;
    left: 82px;
    top: 31px;
    width: 71px;
    height: 71px;
    border-radius: 50%;
    background: #7b1fa2;
    font-size: 40px;
    line-height: 71px;
    text-align: center;
}

.tile-name {
    position: absolute;
    left: 12px;
    top: 102px;
    font-size: 15px;
    line-height: 18px;
    letter-spacing: .15px;
    white-space: nowrap;
}

/* Call controls */
.controls {
    margin-top: auto;
    height: 80px;
    flex: none;
    padding: 0 24px;
    display: flex;
    align-items: center;
    color: #e8eaed;
}

.meeting-info {
    width: 690px;
    display: flex;
    align-items: center;
    gap: 12px;
    font-size: 16px;
}

.clock {
    font-size: 15.5px;
    letter-spacing: -.4px;
}

.code {
    font-weight: 500;
    letter-spacing: .75px;
}

.meeting-info .bar {
    width: 1px;
    height: 18px;
    background: #e8eaed;
}

.call-buttons {
    display: flex;
    gap: 12px;
}

.round {
    position: relative;
    width: 40px;
    height: 40px;
    border: 0;
    border-radius: 50%;
    background: var(--meet-grey);
    color: #fff;
    display: flex;
    align-items: center;
    justify-content: center;
}

.round.red {
    background: var(--meet-red);
}

.round.muted-red {
    background: #6e3029;
    color: #8d8785;
}

.m-ico {
    width: 24px;
    height: 24px;
    flex: none;
}

.warn {
    position: absolute;
    left: 25px;
    top: -1px;
    width: 20px;
    height: 20px;
    border-radius: 50%;
    background: #fa7b17;
    color: #fff;
    font-size: 15px;
    font-weight: 700;
    line-height: 20px;
    text-align: center;
}

.hangup {
    width: 56px;
    height: 40px;
    border: 0;
    border-radius: 20px;
    background: var(--meet-red);
    color: #fff;
    display: flex;
    align-items: center;
    justify-content: center;
}

.side-buttons {
    margin-left: auto;
    display: flex;
    align-items: center;
    gap: 24px;
    color: #fff;
}

.people {
    position: relative;
    display: flex;
}

.people-count {
    position: absolute;
    left: 13px;
    top: -21px;
    width: 28px;
    height: 20px;
    border-radius: 10px;
    background: #5f6368;
    font-size: 12px;
    line-height: 20px;
    text-align: center;
    color: #e8eaed;
}
```
